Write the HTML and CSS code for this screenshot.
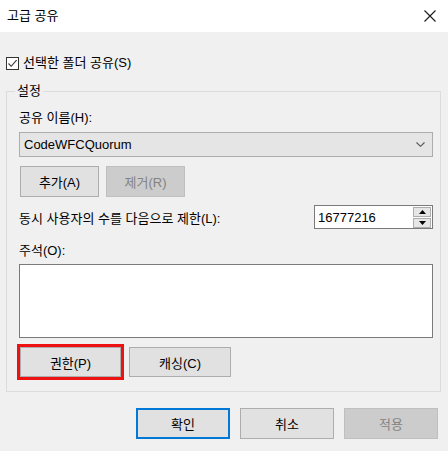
FILE: index.html
```html
<!DOCTYPE html>
<html lang="ko">
<head>
<meta charset="utf-8">
<title>고급 공유</title>
<link rel="stylesheet" href="styles.css">
</head>
<body>
<div class="titlebar">
  <span class="title">고급 공유</span>
  <svg class="close" width="12" height="12" viewBox="0 0 12 12"><path d="M0.5 0.5 L11.5 11.5 M11.5 0.5 L0.5 11.5" stroke="#1a1a1a" stroke-width="1.1" fill="none"/></svg>
</div>
<div class="checkrow">
  <span class="checkbox"><svg width="11" height="11" viewBox="0 0 11 11"><path d="M1.5 5.5 L4.2 8.3 L9.6 2.2" stroke="#333" stroke-width="1.1" fill="none"/></svg></span>
  <span>선택한 폴더 공유(S)</span>
</div>
<fieldset class="group">
  <legend>설정</legend>
  <div class="gbody">
    <div class="label first">공유 이름(H):</div>
    <div class="combo">
      <span>CodeWFCQuorum</span>
      <svg width="9" height="5" viewBox="0 0 9 5"><path d="M0.5 0.5 L4.5 4.3 L8.5 0.5" stroke="#555" stroke-width="1.1" fill="none"/></svg>
    </div>
    <div class="btnrow r1">
      <button class="btn small">추가(A)</button>
      <button class="btn small disabled">제거(R)</button>
    </div>
    <div class="limitrow">
      <span>동시 사용자의 수를 다음으로 제한(L):</span>
      <div class="spin">
        <span class="spinval">16777216</span>
        <div class="spinbtns">
          <span class="sb"><svg width="7" height="4" viewBox="0 0 7 4"><path d="M0 4 L3.5 0 L7 4 Z" fill="#000"/></svg></span>
          <span class="sb"><svg width="7" height="4" viewBox="0 0 7 4"><path d="M0 0 L3.5 4 L7 0 Z" fill="#000"/></svg></span>
        </div>
      </div>
    </div>
    <div class="label note">주석(O):</div>
    <div class="textarea"></div>
    <div class="btnrow r2">
      <button class="btn mid highlight">권한(P)</button>
      <button class="btn mid wide">캐싱(C)</button>
    </div>
  </div>
</fieldset>
<div class="footer">
  <button class="btn big default">확인</button>
  <button class="btn big">취소</button>
  <button class="btn big disabled">적용</button>
</div>
</body>
</html>
```
FILE: styles.css
```css
* { box-sizing: border-box; }
html, body { margin: 0; padding: 0; }
body {
  width: 448px;
  height: 451px;
  overflow: hidden;
  background: #f0f0f0;
  font-family: "Liberation Sans", "Noto Sans CJK KR", sans-serif;
  font-size: 13px;
  color: #000;
}
.titlebar {
  height: 32px;
  background: #fff;
  display: flex;
  align-items: center;
  justify-content: space-between;
  padding: 0 12px 0 7px;
}
.title { line-height: 16px; }
.checkrow {
  margin-top: 24px;
  height: 14px;
  display: flex;
  align-items: center;
  padding-left: 6px;
  gap: 4px;
  line-height: 14px;
}
.checkbox {
  width: 13px;
  height: 13px;
  border: 1px solid #333;
  background: #fff;
  display: flex;
  align-items: center;
  justify-content: center;
}
.group {
  margin: 14px 0 0 6px;
  padding: 0;
  width: 435px;
  border: 1px solid #dcdcdc;
  min-inline-size: 0;
}
.group legend {
  margin-left: 8px;
  padding: 0 2px;
  line-height: 14px;
  color: #000;
}
.gbody {
  padding: 0 0 14px 12px;
}
.label { line-height: 16px; }
.label.first { margin-top: 12px; }
.combo {
  margin-top: 6px;
  width: 414px;
  height: 25px;
  background: #e5e5e5;
  border: 1px solid #adadad;
  display: flex;
  align-items: center;
  justify-content: space-between;
  padding: 0 7px 0 4px;
}
.btnrow { display: flex; gap: 7px; }
.btnrow.r1 { margin-top: 9px; margin-left: 1px; }
.btnrow.r2 { margin-top: 9px; margin-left: 1px; gap: 8px; }
.btn {
  font: inherit;
  color: #000;
  background: #e1e1e1;
  border: 1px solid #adadad;
  padding: 0;
  margin: 0;
  display: flex;
  align-items: center;
  justify-content: center;
}
.btn.small { width: 79px; height: 31px; }
.btn.mid { width: 101px; height: 30px; }
.btn.mid.wide { width: 102px; }
.btn.big { width: 94px; height: 31px; }
.btn.disabled {
  background: #cccccc;
  border-color: #bfbfbf;
  color: #838383;
}
.btn.highlight { outline: 3px solid #ee1111; outline-offset: 0; }
.btn.default { border: 2px solid #0078d7; }
.limitrow {
  margin-top: 8px;
  width: 414px;
  height: 24px;
  display: flex;
  align-items: center;
  justify-content: space-between;
}
.spin {
  width: 119px;
  height: 24px;
  background: #fff;
  border: 1px solid #7a7a7a;
  display: flex;
  align-items: center;
  justify-content: space-between;
  padding: 0 1px 0 3px;
}
.spinbtns {
  display: flex;
  flex-direction: column;
  gap: 1px;
  height: 22px;
  justify-content: center;
}
.sb {
  width: 18px;
  height: 10px;
  background: #e6e6e6;
  border: 1px solid #adadad;
  display: flex;
  align-items: center;
  justify-content: center;
}
.label.note { margin-top: 14px; }
.textarea {
  margin-top: 5px;
  width: 414px;
  height: 74px;
  background: #fff;
  border: 1px solid #7a7a7a;
}
.footer {
  margin-top: 16px;
  display: flex;
  justify-content: flex-end;
  gap: 10px;
  padding-right: 10px;
}
```
